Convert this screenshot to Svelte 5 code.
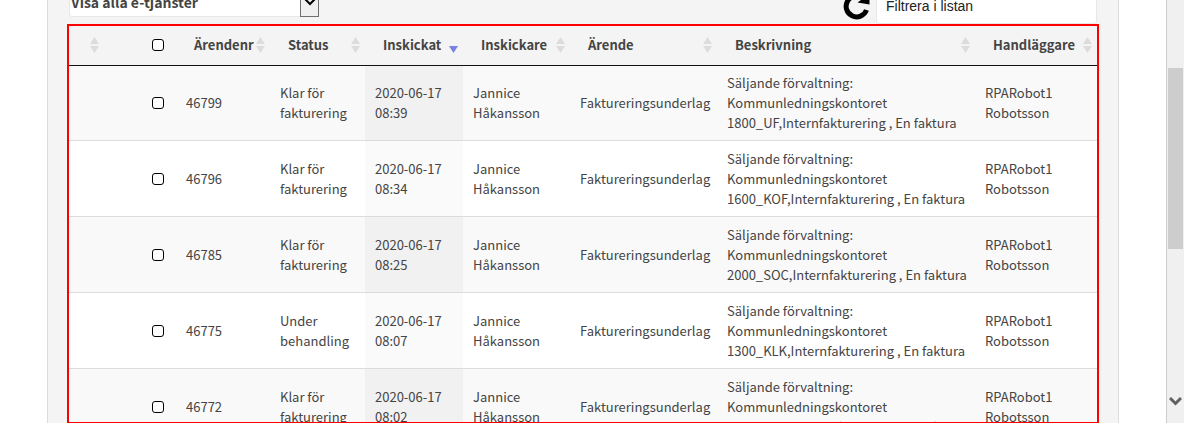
<script>
  const columns = [
    { label: '', width: 35, sortable: true },
    { label: '', width: 72, check: true },
    { label: 'Ärendenr', width: 94, sortable: true },
    { label: 'Status', width: 95, sortable: true },
    { label: 'Inskickat', width: 98, sortable: true, sorted: true },
    { label: 'Inskickare', width: 107, sortable: true },
    { label: 'Ärende', width: 147, sortable: true },
    { label: 'Beskrivning', width: 258, sortable: true },
    { label: 'Handläggare', width: 122, sortable: true }
  ];

  const rows = [
    { id: '46799', status: ['Klar för', 'fakturering'], time: '08:39', code: '1800_UF' },
    { id: '46796', status: ['Klar för', 'fakturering'], time: '08:34', code: '1600_KOF' },
    { id: '46785', status: ['Klar för', 'fakturering'], time: '08:25', code: '2000_SOC' },
    { id: '46775', status: ['Under', 'behandling'], time: '08:07', code: '1300_KLK' },
    { id: '46772', status: ['Klar för', 'fakturering'], time: '08:02', code: '1300_KLK' }
  ];

  let selected = $state([]);
  let all = $derived(selected.length === rows.length);

  function toggleAll() {
    selected = all ? [] : rows.map((r) => r.id);
  }
</script>

<div class="page">
  <main class="card">
    <div class="toolbar">
      <div class="picker">
        <select aria-label="E-tjänst">
          <option>Visa alla e-tjänster</option>
        </select>
        <span class="arrow">
          <svg width="12" height="8" viewBox="0 0 12 8"><path d="M1 1 L6 6 L11 1" fill="none" stroke="#000" stroke-width="2" /></svg>
        </span>
      </div>
      <button class="refresh" aria-label="Uppdatera">
        <svg width="28" height="28" viewBox="0 0 28 28">
          <path d="M24.500 18 A10.500 10.500 0 1 1 21 6" fill="none" stroke="#000" stroke-width="5" />
          <path d="M27.500 2 V12.500 L15.500 10.500 Z" fill="#000" />
        </svg>
      </button>
      <input class="filter" type="text" placeholder="Filtrera i listan" aria-label="Filtrera i listan" />
    </div>

    <div class="frame">
      <table>
        <colgroup>
          {#each columns as c}<col style="width: {c.width}px" />{/each}
        </colgroup>
        <thead>
          <tr>
            {#each columns as c}
              <th>
                {#if c.check}
                  <input type="checkbox" aria-label="Markera alla" checked={all} onchange={toggleAll} />
                {:else}
                  <button class="sort" aria-label={c.label || 'Sortera'}>
                    <span>{c.label}</span>
                    <svg width="9" height="16" viewBox="0 0 9 16">
                      {#if c.sorted}
                        <path d="M0 9 H9 L4.500 16 Z" fill="#7a82e0" />
                      {:else}
                        <path d="M0 7 H9 L4.500 0 Z M0 9 H9 L4.500 16 Z" fill="#dcdcdc" />
                      {/if}
                    </svg>
                  </button>
                {/if}
              </th>
            {/each}
          </tr>
        </thead>
        <tbody>
          {#each rows as r}
            <tr>
              <td></td>
              <td class="check"><input type="checkbox" aria-label="Markera {r.id}" value={r.id} bind:group={selected} /></td>
              <td>{r.id}</td>
              <td>{r.status[0]}<br />{r.status[1]}</td>
              <td class="sorted">2020-06-17<br />{r.time}</td>
              <td>Jannice<br />Håkansson</td>
              <td>Faktureringsunderlag</td>
              <td>Säljande förvaltning:<br />Kommunledningskontoret<br />{r.code},Internfakturering , En faktura</td>
              <td>RPARobot1<br />Robotsson</td>
            </tr>
          {/each}
        </tbody>
      </table>
    </div>
  </main>

  <div class="scrollbar" aria-hidden="true">
    <div class="thumb"></div>
    <svg width="13" height="11" viewBox="0 0 13 11"><path d="M1 2 L6.500 7.500 L12 2" fill="none" stroke="#606060" stroke-width="3" /></svg>
  </div>
</div>

<style>
  :global(body) {
    margin: 0;
    background: #fff;
  }
  .page {
    display: flex;
    height: calc(100vh - 25px);
    overflow: hidden;
    font-family: 'Noto Sans CJK SC', 'Noto Sans', sans-serif;
    font-size: 13px;
    line-height: 20px;
    color: #444;
  }
  .card {
    flex: 1;
    min-width: 0;
    display: flex;
    flex-direction: column;
    box-sizing: border-box;
    margin: 0 47px;
    padding: 0 19px;
    background: #f4f4f4;
    border: solid #dcdcdc;
    border-width: 0 1px;
  }
  .toolbar {
    flex: none;
    display: flex;
    align-items: flex-end;
    height: 24px;
    padding: 0 2px;
    overflow: hidden;
  }
  .picker {
    position: relative;
    width: 250px;
    height: 30px;
    margin: 0 auto 7px 0;
  }
  select {
    appearance: none;
    box-sizing: border-box;
    width: 100%;
    height: 30px;
    padding: 0 24px 0 1px;
    border: 1px solid #e8e8e8;
    border-radius: 3px;
    background: #fff;
    color: #444;
    font: 700 14px 'Noto Sans CJK SC', 'Noto Sans', sans-serif;
  }
  .arrow {
    position: absolute;
    right: 0;
    bottom: 0;
    display: flex;
    align-items: center;
    justify-content: center;
    box-sizing: border-box;
    width: 19px;
    height: 30px;
    border: 1px solid #707070;
    background: #f0f0f0;
    pointer-events: none;
  }
  .refresh {
    height: 28px;
    margin: 0 6px 4px 0;
    padding: 0;
    border: 0;
    background: none;
  }
  svg {
    display: block;
  }
  .filter {
    box-sizing: border-box;
    width: 221px;
    height: 36px;
    padding: 0 9px;
    border: 1px solid #e8e8e8;
    border-radius: 3px;
    background: #fff;
    font: 14px 'Liberation Sans', sans-serif;
  }
  .filter::placeholder {
    color: #222;
    opacity: 1;
  }
  .frame {
    flex: 1;
    min-height: 0;
    margin-bottom: -1px;
    border: 2px solid #f00;
    overflow: hidden;
  }
  table {
    width: 100%;
    table-layout: fixed;
    border-collapse: separate;
    border-spacing: 0;
  }
  th {
    box-sizing: border-box;
    height: 40px;
    padding: 0 0 2px;
    border-bottom: 1px solid #111;
  }
  th:nth-child(2) {
    padding: 0 12px 2px 0;
  }
  .sort {
    display: flex;
    align-items: center;
    justify-content: space-between;
    width: 100%;
    padding: 0 5px 0 18px;
    border: 0;
    background: none;
    color: inherit;
    font: inherit;
    font-weight: 700;
    line-height: 20px;
    white-space: nowrap;
  }
  input[type='checkbox'] {
    appearance: none;
    display: block;
    box-sizing: border-box;
    width: 12px;
    height: 12px;
    margin: 0 0 0 auto;
    border: 1px solid #000;
    border-radius: 3px;
    background: #fff;
  }
  input[type='checkbox']:checked {
    background: #444;
  }
  td {
    box-sizing: border-box;
    height: 76px;
    padding: 7px 0 7px 10px;
    border-bottom: 1px solid #dcdcdc;
    background: #fff;
    white-space: nowrap;
  }
  td.check {
    padding: 0 12px 0 0;
  }
  tr:first-child td {
    height: 75px;
  }
  tr:nth-child(odd) td {
    background: #f9f9f9;
  }
  td.sorted {
    background: #fafafa;
  }
  tr:nth-child(odd) td.sorted {
    background: #f1f1f1;
  }
  .scrollbar {
    flex: none;
    display: flex;
    flex-direction: column;
    align-items: center;
    justify-content: space-between;
    width: 18px;
    padding: 68px 0 16px;
    box-sizing: border-box;
    border-left: 1px solid #cdcdcd;
    background: #f0f0f0;
  }
  .thumb {
    width: 15px;
    height: 181px;
    background: #cdcdcd;
  }
</style>
